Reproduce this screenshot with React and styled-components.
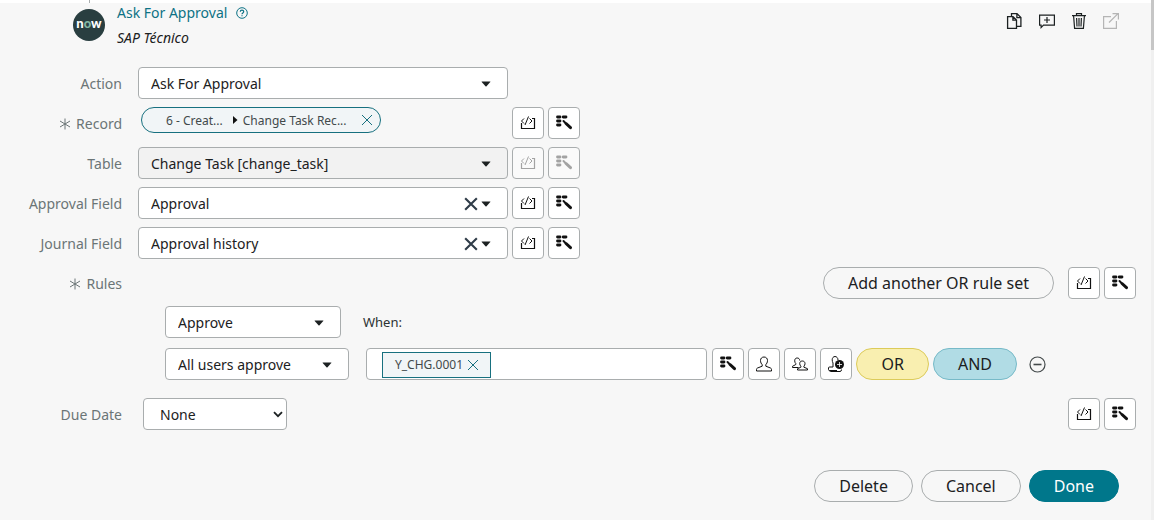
import React, { useState } from "react";
import styled, { createGlobalStyle, css } from "styled-components";

const GlobalStyle = createGlobalStyle`
* {
  box-sizing: border-box;
}

body {
  margin: 0;
  background-color: #f7f7f7;
  color: #1c2122;
  font-family: "Noto Sans", "Open Sans", sans-serif;
  font-size: 14px;
}

button, input, select {
  font-family: inherit;
  color: inherit;
  margin: 0;
}

button {
  cursor: pointer;
}
`;

const Page = styled.div`
  display: flex;
  min-height: 100vh;
`;

const Panel = styled.main`
  flex: 1;
  min-width: 0;
`;

/* end of the line that joins this step to the one above */
const Connector = styled.div`
  height: 3px;
  padding-left: 89px;
  background-color: #ffffff;

  &::before {
    content: "";
    display: block;
    width: 1px;
    height: 3px;
    background-color: #a9adae;
  }
`;

const ScrollTrack = styled.div`
  width: 3px;
  background-color: #f0f0f0;
`;

const ScrollThumb = styled.div`
  height: 50px;
  background-color: #c6c6c6;
`;

const Header = styled.header`
  display: flex;
  align-items: flex-start;
  height: 64px;
  padding: 0 31px 0 73px;
`;

const Logo = styled.svg`
  width: 32px;
  height: 32px;
  margin-top: 6px;
  flex: none;
`;

const Titles = styled.div`
  flex: 1;
  margin-left: 12px;
`;

const TitleLine = styled.div`
  display: flex;
  align-items: center;
  gap: 9px;
  height: 20px;

  a {
    color: #0d7285;
    line-height: 20px;
    text-decoration: none;
  }
`;

const Subtitle = styled.p`
  margin: 5px 0 0;
  line-height: 20px;
  font-style: italic;
`;

const Tools = styled.div`
  display: flex;
  gap: 14px;
  padding-top: 9px;
`;

const PlainButton = styled.button`
  display: flex;
  align-items: center;
  justify-content: center;
  padding: 0;
  border: 0;
  background: none;
  color: ${(props) => props.$color || "#1c2122"};
`;

const Form = styled.form`
  display: flex;
  flex-direction: column;
  gap: 8px;
  padding-right: 15px;
`;

const Row = styled.div`
  display: flex;
  align-items: center;
  gap: 4px;
  min-height: 32px;
`;

const Label = styled.label`
  display: flex;
  align-items: center;
  justify-content: flex-end;
  gap: 5px;
  flex: none;
  width: 122px;
  margin-right: 12px;
  padding-top: 1px;
  color: #6b7576;
  line-height: 20px;
  white-space: nowrap;
`;

const Field = styled.div`
  position: relative;
  flex: 0 1 ${(props) => props.$width || 370}px;
  min-width: 0;
  margin-left: ${(props) => props.$inset || 0}px;
`;

const Select = styled.select`
  display: block;
  width: 100%;
  height: 32px;
  padding: 0 32px 0 ${(props) => props.$indent || 12}px;
  border: 1px solid #a9adae;
  border-radius: 4px;
  background-color: ${(props) => (props.$muted ? "#f2f2f2" : "#ffffff")};
  font-size: 14px;
  appearance: none;
`;

/* icons that sit over the right end of a select */
const Adornment = styled.div`
  position: absolute;
  top: 0;
  right: ${(props) => props.$right || 17}px;
  display: flex;
  align-items: center;
  gap: 3px;
  height: 100%;
  padding-top: ${(props) => (props.$right ? 0 : 2)}px;
  pointer-events: none;

  button {
    pointer-events: auto;
  }
`;

const PillBox = styled.div`
  flex: 0 1 370px;
  align-self: flex-start;
  padding-left: 3px;
`;

const Pill = styled.div`
  display: flex;
  align-items: center;
  width: 240px;
  height: 26px;
  padding: 0 7px 0 24px;
  border: 1px solid #17707f;
  border-radius: 13px;
  background-color: #f1f5f7;
  color: #42494b;
  font-size: 12px;
  white-space: nowrap;

  svg {
    flex: none;
  }

  span + svg {
    margin: 0 5px 0 9px;
  }

  button {
    margin-left: auto;
  }
`;

const IconButton = styled.button`
  display: flex;
  align-items: center;
  justify-content: center;
  flex: none;
  width: 32px;
  height: 32px;
  padding: 0;
  border: 1px solid #a9adae;
  border-radius: 4px;
  background-color: #ffffff;
  color: #111111;

  &:disabled {
    background-color: #fafafa;
    color: #a3a3a3;
    cursor: default;
  }
`;

const RoundButton = styled.button`
  flex: none;
  height: 32px;
  padding: 0 24px;
  border: 1px solid #a9adae;
  border-radius: 16px;
  background-color: transparent;
  font-size: 16px;
  white-space: nowrap;

  ${(props) => props.$tone === "primary" && css`
    border-color: #00778b;
    background-color: #00778b;
    color: #ffffff;
  `}

  ${(props) => props.$tone === "or" && css`
    border-color: #dccb5a;
    background-color: #f9efb0;
  `}

  ${(props) => props.$tone === "and" && css`
    border-color: #77bac8;
    background-color: #b1dce5;
  `}
`;

const Spacer = styled.div`
  flex: 1;
`;

const AddRule = styled.div`
  margin-right: 10px;
`;

const Rules = styled.div`
  display: flex;
  flex-direction: column;
  gap: 10px;
  margin: -1px 0 10px;
  padding: 0 90px 0 165px;
`;

const When = styled.span`
  margin-left: 18px;
  font-size: 13px;
  color: #2b3233;
`;

const Approvers = styled.div`
  display: flex;
  align-items: center;
  flex: 1;
  min-width: 0;
  height: 32px;
  margin: 0 1px 0 13px;
  padding: 0 15px;
  border: 1px solid #a9adae;
  border-radius: 4px;
  background-color: #ffffff;

  input {
    flex: 1;
    min-width: 0;
    height: 28px;
    border: 0;
    outline: 0;
    background: none;
  }
`;

const Tag = styled.span`
  display: flex;
  align-items: center;
  gap: 4px;
  height: 26px;
  margin-top: 1px;
  padding: 0 11px 0 12px;
  border: 1px solid #17707f;
  background-color: #f1f5f7;
  color: #42494b;
  font-size: 12px;
`;

const RuleActions = styled.div`
  display: flex;
  align-items: center;
  gap: 4px;

  ${PlainButton} {
    margin-left: 8px;
  }
`;

const Footer = styled.div`
  display: flex;
  justify-content: flex-end;
  gap: 8px;
  margin-top: 32px;
  padding: 0 17px 16px 0;
`;

const Caret = () => (
  <svg width="10" height="6" viewBox="0 0 10 6" fill="currentColor" aria-hidden="true">
    <path d="M1 .5h8q.8 0 .3.6L5.500 5.200q-.5.5-1 0L.7 1.100Q.2.5 1 .5z" />
  </svg>
);

const Cross = ({ size = 12, weight = 1 }) => (
  <svg width={size} height={size} viewBox="0 0 12 12" fill="none" stroke="currentColor" strokeWidth={weight} aria-hidden="true">
    <path d="M1 1l10 10M11 1L1 11" />
  </svg>
);

const Star = () => (
  <svg width="12" height="12" viewBox="0 0 12 12" fill="none" stroke="currentColor" aria-hidden="true">
    <path d="M6 .5v11M1 3l10 6M11 3L1 9" />
  </svg>
);

const ScriptIcon = () => (
  <svg width="16" height="16" viewBox="0 0 16 16" fill="none" stroke="currentColor" aria-hidden="true">
    <path d="M1.500 8v5.500h13v-10H12" strokeWidth="1.200" />
    <path d="M4 3.500L1.500 6 4 8.500M9.500 3.500L12 6 9.500 8.500M8.500 1.500L5 10" />
  </svg>
);

const PillPickerIcon = () => (
  <svg width="18" height="16" viewBox="0 0 18 16" fill="none" stroke="currentColor" strokeLinecap="round" aria-hidden="true">
    <path d="M2.500 2h2.500M8.200 2h2.800M2.500 6h2.500M2.500 10h2.500" strokeWidth="2.800" />
    <path d="M11 8.500L15.500 12.700" strokeWidth="3" />
    <path d="M8.500 6L10 7.500" strokeWidth="2" />
  </svg>
);

const UserIcon = () => (
  <svg width="18" height="18" viewBox="0 0 18 18" fill="none" stroke="currentColor" strokeLinejoin="round" aria-hidden="true">
    <path d="M9 2C6.800 2 5.500 3.500 5.500 5.500c0 2 .9 3.300 1.700 4.200v1.500L2.500 13c-.7.3-1 .8-1 1.500V16h15v-1.500c0-.7-.3-1.200-1-1.500l-4.700-1.800V9.700c.8-.9 1.700-2.200 1.700-4.200C12.500 3.500 11.200 2 9 2z" />
  </svg>
);

const GroupIcon = () => (
  <svg width="18" height="18" viewBox="0 0 18 18" fill="none" stroke="currentColor" strokeLinejoin="round" aria-hidden="true">
    <path d="M7.500 12.500H1.500v-1.200L4.800 9.500V8.500C4.200 8 3.700 7 3.700 5.800 3.700 4 4.700 3 6.200 3s2.500 1 2.500 2.500" />
    <path d="M11.300 6c-1.600 0-2.600 1-2.600 2.600 0 1.200.5 2 1.200 2.600v1l-3.400 1.500V15h10v-1.300l-3.600-1.500v-1c.7-.6 1.100-1.400 1.100-2.600C14 7 12.900 6 11.300 6z" />
  </svg>
);

const StampIcon = () => (
  <svg width="18" height="18" viewBox="0 0 18 18" fill="none" stroke="currentColor" aria-hidden="true">
    <path d="M10 15.500H2.500q-1 0-1-1v-1.500q0-1 1-1h3.500V8C5.500 7 5.200 6 5.200 4.800 5.200 3 6.300 1.500 8 1.500s3 1.500 3 3.500M2.500 15.500q0 1 1 1h9.500q1.500 0 1.500-2" />
    <circle cx="12.500" cy="9.500" r="4.500" fill="currentColor" stroke="none" />
    <path d="M12.500 7v5M10 9.500h5" stroke="#ffffff" strokeWidth=".8" />
  </svg>
);

const MinusIcon = () => (
  <svg width="17" height="17" viewBox="0 0 17 17" fill="none" stroke="currentColor" strokeWidth="1.200" aria-hidden="true">
    <circle cx="8.500" cy="8.500" r="7.500" />
    <path d="M4.500 8.500h8" strokeWidth="1.600" />
  </svg>
);

const Chevron = () => (
  <svg width="10" height="7" viewBox="0 0 10 7" fill="none" stroke="currentColor" strokeWidth="1.800" aria-hidden="true">
    <path d="M1 1.200l4 4 4-4" />
  </svg>
);

const HelpIcon = () => (
  <svg width="12" height="12" viewBox="0 0 12 12" fill="none" stroke="currentColor" aria-hidden="true">
    <circle cx="6" cy="6" r="5.300" />
    <path d="M4.300 4.800c0-2.200 3.400-2.200 3.400 0 0 1.200-1.700 1.100-1.700 2.400M6 8.200v1.100" strokeWidth="1.200" />
  </svg>
);

const CopyIcon = () => (
  <svg width="18" height="18" viewBox="0 0 18 18" fill="none" stroke="currentColor" strokeWidth="1.300" aria-hidden="true">
    <path d="M5.500 4V1.600h5.500L14.900 5.500v8.900H11M10.900 1.600v4h4" />
    <path d="M1.600 4.600h5.400l3.500 3.500v8.300H1.600zM6.900 4.600v3.600h3.600" />
  </svg>
);

const CommentIcon = () => (
  <svg width="18" height="18" viewBox="0 0 18 18" fill="none" stroke="currentColor" strokeWidth="1.200" aria-hidden="true">
    <path d="M1.600 3.100h14.800v10H5.500l-2.400 2.500v-2.500H1.600z" />
    <path d="M9 5v6M6 8h6" />
  </svg>
);

const TrashIcon = () => (
  <svg width="18" height="18" viewBox="0 0 18 18" fill="none" stroke="currentColor" strokeWidth="1.200" aria-hidden="true">
    <path d="M2 3.600h14M6.500 3.300V1.600h5v1.700M3.600 4l1 12.400h8.800l1-12.400" />
    <path d="M6.600 6l.4 8.500M9 6v8.500M11.400 6l-.4 8.500" />
  </svg>
);

const OpenIcon = () => (
  <svg width="18" height="18" viewBox="0 0 18 18" fill="none" stroke="currentColor" strokeWidth="1.200" aria-hidden="true">
    <path d="M9 4.600H1.600v11.800h12.800V9M7 10.500L16 1.600M10.500 1.600h5.900v5.900" />
  </svg>
);

const DataButtons = ({ name, disabled }) => (
  <>
    <IconButton type="button" disabled={disabled} aria-label={`${name} script`}>
      <ScriptIcon />
    </IconButton>
    <IconButton type="button" disabled={disabled} aria-label={`${name} data pill picker`}>
      <PillPickerIcon />
    </IconButton>
  </>
);

const SelectRow = ({ id, label, value, clearable, muted, children }) => (
  <Row>
    <Label htmlFor={id}>{label}</Label>
    <Field>
      <Select id={id} $muted={muted}>
        <option>{value}</option>
      </Select>
      <Adornment>
        {clearable && (
          <PlainButton type="button" $color="#2f3c48" aria-label={`Clear ${label}`}>
            <Cross size={14} weight={1.8} />
          </PlainButton>
        )}
        <Caret />
      </Adornment>
    </Field>
    {children}
  </Row>
);

const App = () => {
  const [approver, setApprover] = useState("");

  return (
    <>
      <GlobalStyle />
      <Page>
        <Panel>
          <Connector />
          <Header>
            <Logo viewBox="0 0 32 32" role="img" aria-label="now">
              <circle cx="16" cy="16" r="16" fill="#293e40" />
              <text x="16" y="19" textAnchor="middle" fontFamily="Lato, sans-serif" fontWeight="900" fontSize="13" fill="#ffffff">
                n<tspan fill="#81b5a1">o</tspan>w
              </text>
            </Logo>
            <Titles>
              <TitleLine>
                <a href="#action">Ask For Approval</a>
                <PlainButton type="button" $color="#0d7285" aria-label="Help">
                  <HelpIcon />
                </PlainButton>
              </TitleLine>
              <Subtitle>SAP Técnico</Subtitle>
            </Titles>
            <Tools>
              <PlainButton type="button" aria-label="Copy"><CopyIcon /></PlainButton>
              <PlainButton type="button" aria-label="Add comment"><CommentIcon /></PlainButton>
              <PlainButton type="button" aria-label="Delete action"><TrashIcon /></PlainButton>
              <PlainButton type="button" $color="#b5b5b5" aria-label="Open"><OpenIcon /></PlainButton>
            </Tools>
          </Header>

          <Form onSubmit={(e) => e.preventDefault()}>
            <SelectRow id="action" label="Action" value="Ask For Approval" />
            <Row>
              <Label as="span"><Star />Record</Label>
              <PillBox>
                <Pill>
                  <span>6 - Creat...</span>
                  <svg width="6" height="8" viewBox="0 0 6 8" fill="#111111" aria-hidden="true">
                    <path d="M1 0l4.500 4L1 8z" />
                  </svg>
                  <span>Change Task Rec...</span>
                  <PlainButton type="button" $color="#17707f" aria-label="Remove record">
                    <Cross />
                  </PlainButton>
                </Pill>
              </PillBox>
              <DataButtons name="Record" />
            </Row>
            <SelectRow id="table" label="Table" value="Change Task [change_task]" muted>
              <DataButtons name="Table" disabled />
            </SelectRow>
            <SelectRow id="approval-field" label="Approval Field" value="Approval" clearable>
              <DataButtons name="Approval Field" />
            </SelectRow>
            <SelectRow id="journal-field" label="Journal Field" value="Approval history" clearable>
              <DataButtons name="Journal Field" />
            </SelectRow>
            <Row>
              <Label as="span"><Star />Rules</Label>
              <Spacer />
              <AddRule>
                <RoundButton type="button">Add another OR rule set</RoundButton>
              </AddRule>
              <DataButtons name="Rules" />
            </Row>

            <Rules>
              <Row>
                <Field $width={176}>
                  <Select aria-label="Rule outcome">
                    <option>Approve</option>
                  </Select>
                  <Adornment><Caret /></Adornment>
                </Field>
                <When>When:</When>
              </Row>
              <Row>
                <Field $width={184}>
                  <Select aria-label="Rule condition">
                    <option>All users approve</option>
                  </Select>
                  <Adornment><Caret /></Adornment>
                </Field>
                <Approvers>
                  <Tag>
                    Y_CHG.0001
                    <PlainButton type="button" $color="#17707f" aria-label="Remove Y_CHG.0001">
                      <Cross />
                    </PlainButton>
                  </Tag>
                  <input aria-label="Approvers" value={approver} onChange={(e) => setApprover(e.target.value)} />
                </Approvers>
                <RuleActions>
                  <IconButton type="button" aria-label="Approver data pill picker"><PillPickerIcon /></IconButton>
                  <IconButton type="button" aria-label="Add user"><UserIcon /></IconButton>
                  <IconButton type="button" aria-label="Add group"><GroupIcon /></IconButton>
                  <IconButton type="button" aria-label="Add manual approvers"><StampIcon /></IconButton>
                  <RoundButton type="button" $tone="or">OR</RoundButton>
                  <RoundButton type="button" $tone="and">AND</RoundButton>
                  <PlainButton type="button" $color="#444a4b" aria-label="Remove rule"><MinusIcon /></PlainButton>
                </RuleActions>
              </Row>
            </Rules>

            <Row>
              <Label htmlFor="due-date">Due Date</Label>
              <Field $width={144} $inset={5}>
                <Select id="due-date" $indent={16}>
                  <option>None</option>
                </Select>
                <Adornment $right={4}><Chevron /></Adornment>
              </Field>
              <Spacer />
              <DataButtons name="Due Date" />
            </Row>

            <Footer>
              <RoundButton type="button">Delete</RoundButton>
              <RoundButton type="button">Cancel</RoundButton>
              <RoundButton type="submit" $tone="primary">Done</RoundButton>
            </Footer>
          </Form>
        </Panel>
        <ScrollTrack>
          <ScrollThumb />
        </ScrollTrack>
      </Page>
    </>
  );
};

export default App;
